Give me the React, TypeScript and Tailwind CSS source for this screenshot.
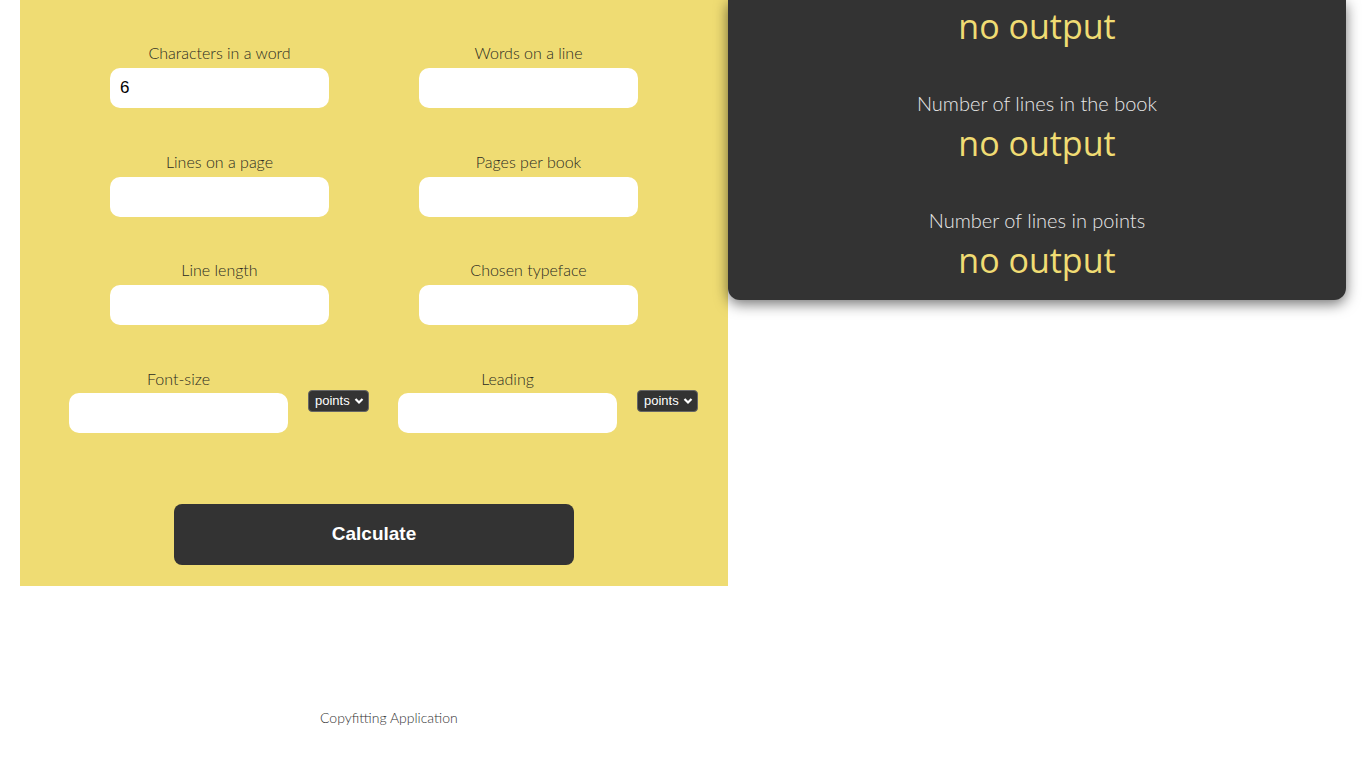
import { useState } from 'react';

const LABEL_FONT = { fontFamily: 'Lato, "Open Sans", sans-serif' };

function Field({ label, value }: { label: string; value?: string }) {
  return (
    <div className="flex flex-col items-center">
      <label className="h-5 text-[16px] leading-5 font-light text-[#2a2a22]" style={LABEL_FONT}>
        {label}
      </label>
      <input
        defaultValue={value}
        className="mt-[5px] h-10 w-[219px] rounded-[10px] bg-white px-[10px] text-[17px] text-black outline-none"
        style={{ fontFamily: '"Liberation Sans", Arial, sans-serif' }}
      />
    </div>
  );
}

function UnitField({ label }: { label: string }) {
  return (
    <div className="flex items-center gap-5">
      <div className="flex flex-col items-center">
        <label className="h-5 text-[16px] leading-5 font-light text-[#2a2a22]" style={LABEL_FONT}>
          {label}
        </label>
        <input
          className="mt-[4px] h-10 w-[219px] rounded-[10px] bg-white px-[10px] text-[17px] outline-none"
          style={{ fontFamily: '"Liberation Sans", Arial, sans-serif' }}
        />
      </div>
      <div
        className="flex h-[22px] w-[61px] items-center justify-between rounded-[4px] border border-[#666] bg-[#333] pl-[6px] pr-[4px] text-[13px] text-white"
        style={{ fontFamily: '"Liberation Sans", Arial, sans-serif' }}
      >
        <span>points</span>
        <svg width="10" height="10" viewBox="0 0 10 10">
          <path d="M1.5 3 L5 6.5 L8.5 3" fill="none" stroke="white" strokeWidth="2.2" />
        </svg>
      </div>
    </div>
  );
}

function Output({ label }: { label?: string }) {
  return (
    <div className="flex flex-col items-center">
      {label && (
        <div className="h-6 text-[20px] leading-6 font-light text-[#e8e8e8]" style={LABEL_FONT}>
          {label}
        </div>
      )}
      <div
        className={`${label ? 'mt-2' : ''} h-10 text-[34px] leading-10 font-medium text-[#f0dc73]`}
        style={{ fontFamily: '"Open Sans", Lato, sans-serif' }}
      >
        no output
      </div>
    </div>
  );
}

export default function App() {
  const [chars] = useState('6');
  return (
    <div className="min-h-[768px] bg-white">
      <div className="flex items-start">
        <div className="ml-5 flex w-[708px] flex-col items-center bg-[#efdc73] pt-[43px] pb-[21px]">
          <div className="grid w-[618px] grid-cols-2 gap-y-[43.5px]">
            <Field label="Characters in a word" value={chars} />
            <Field label="Words on a line" />
            <Field label="Lines on a page" />
            <Field label="Pages per book" />
            <Field label="Line length" />
            <Field label="Chosen typeface" />
          </div>
          <div className="mt-[43.5px] flex w-[708px] pl-[49px]">
            <UnitField label="Font-size" />
            <div className="ml-[29px]">
              <UnitField label="Leading" />
            </div>
          </div>
          <button
            className="mt-[71px] h-[61px] w-[400px] rounded-lg bg-[#333] text-[19px] font-bold text-white"
            style={{ fontFamily: '"Liberation Sans", Arial, sans-serif' }}
          >
            Calculate
          </button>
        </div>
        <div className="flex w-[618px] flex-col items-center gap-[45px] rounded-b-xl bg-[#333] pt-[6px] pb-5 shadow-[0_4px_14px_rgba(0,0,0,0.55)]">
          <Output />
          <Output label="Number of lines in the book" />
          <Output label="Number of lines in points" />
        </div>
      </div>
      <div className="mt-[121px] pl-[320px] text-[14px] font-light text-[#333]" style={LABEL_FONT}>
        Copyfitting Application
      </div>
    </div>
  );
}
